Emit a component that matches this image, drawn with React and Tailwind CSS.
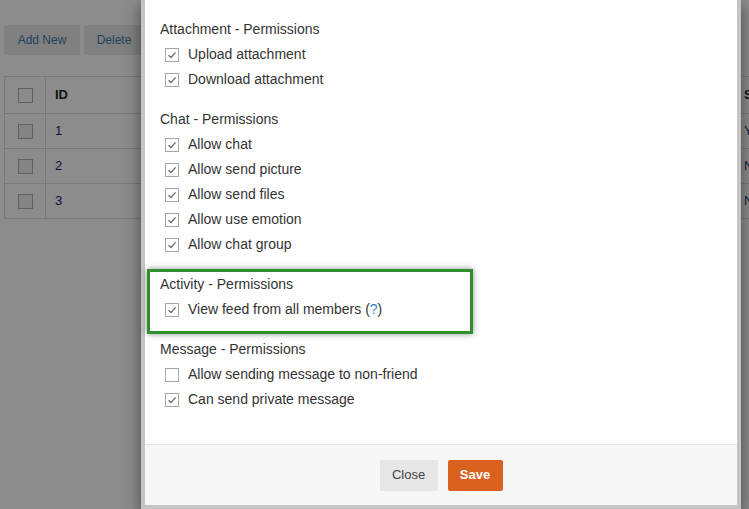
import React from "react";

const sections = [
  {
    title: "Attachment - Permissions",
    items: [
      { label: "Upload attachment", checked: true },
      { label: "Download attachment", checked: true },
    ],
  },
  {
    title: "Chat - Permissions",
    items: [
      { label: "Allow chat", checked: true },
      { label: "Allow send picture", checked: true },
      { label: "Allow send files", checked: true },
      { label: "Allow use emotion", checked: true },
      { label: "Allow chat group", checked: true },
    ],
  },
];

function Check({ checked }) {
  return (
    <span className="w-[14px] h-[14px] border border-[#a6a6a6] bg-white flex items-center justify-center shrink-0">
      {checked && (
        <svg width="10" height="10" viewBox="0 0 10 10">
          <path d="M1.5 5.2 L4 7.5 L8.6 2.4" fill="none" stroke="#6b6b6b" strokeWidth="1.3" />
        </svg>
      )}
    </span>
  );
}

function Item({ label, checked, children }) {
  return (
    <label className="flex items-center h-[25px] pl-[5px]">
      <Check checked={checked} />
      <span className="ml-[9px]">
        {label}
        {children}
      </span>
    </label>
  );
}

function Section({ title, items }) {
  return (
    <div>
      <div className="h-[25px] leading-[25px]">{title}</div>
      {items.map((it) => (
        <Item key={it.label} label={it.label} checked={it.checked} />
      ))}
    </div>
  );
}

export default function App() {
  return (
    <div
      className="relative w-[749px] h-[509px] overflow-hidden bg-white"
      style={{ fontFamily: '"Liberation Sans", Arial, sans-serif' }}
    >
      {/* page underneath */}
      <div className="pt-[25px] pl-[4px]">
        <div className="flex gap-[4px] text-[12px]">
          <button className="h-[30px] w-[76px] bg-[#eaeaea] text-[#3d7ab0] rounded-[2px]">Add New</button>
          <button className="h-[30px] w-[60px] bg-[#eaeaea] text-[#3d7ab0] rounded-[2px]">Delete</button>
        </div>
        <table className="mt-[21px] w-[900px] border-collapse text-[13px] text-[#222]">
          <tbody>
            <tr className="h-[37px]">
              <td className="w-[41px] border border-[#dcdcdc] text-center">
                <span className="inline-block w-[15px] h-[15px] border border-[#b0b0b0] bg-white align-middle" />
              </td>
              <td className="w-[691px] border border-[#dcdcdc] pl-[9px] font-bold">ID</td>
              <td className="border border-[#dcdcdc] pl-[7px] font-bold">S</td>
            </tr>
            {[
              ["1", "Y"],
              ["2", "N"],
              ["3", "N"],
            ].map(([id, s]) => (
              <tr key={id} className="h-[35px]">
                <td className="border border-[#dcdcdc] text-center">
                  <span className="inline-block w-[15px] h-[15px] border border-[#b0b0b0] bg-[#eeeeee] align-middle" />
                </td>
                <td className="border border-[#dcdcdc] pl-[9px] text-[#1a237e]">{id}</td>
                <td className="border border-[#dcdcdc] pl-[7px] text-[#1a3a7e]">{s}</td>
              </tr>
            ))}
          </tbody>
        </table>
      </div>

      {/* overlay */}
      <div className="absolute inset-0 bg-black/[0.45]" />

      {/* modal */}
      <div className="absolute left-[141px] top-0 w-[600px] h-[509px] border-x-4 border-b-4 border-[#c4c4c4] bg-white shadow-[0_5px_15px_rgba(0,0,0,0.5)] flex flex-col">
        <div className="flex-1 px-[15px] pt-[17px] text-[14px] text-[#333]">
          <Section {...sections[0]} />
          <div className="mt-[15px]">
            <Section {...sections[1]} />
          </div>
          <div className="mt-[12px] ml-[-13px] w-[326px] border-[3px] border-[#2f8f2a] pl-[10px] pb-[9px] shadow-[0_0_6px_rgba(0,0,0,0.45)]">
            <div className="h-[25px] leading-[25px]">Activity - Permissions</div>
            <Item label="View feed from all members" checked>
              {" "}(<span className="text-[#2a8ad4]">?</span>)
            </Item>
          </div>
          <div className="mt-[3px]">
            <Section
              title="Message - Permissions"
              items={[
                { label: "Allow sending message to non-friend", checked: false },
                { label: "Can send private message", checked: true },
              ]}
            />
          </div>
        </div>
        <div className="h-[61px] border-t border-[#e3e3e3] bg-[#f7f7f7] flex items-center justify-center gap-[10px]">
          <button className="h-[31px] w-[58px] bg-[#e6e6e6] text-[#444] text-[13px] rounded-[2px]">Close</button>
          <button className="h-[31px] w-[55px] bg-[#d9601f] text-white text-[13px] font-bold rounded-[2px]">Save</button>
        </div>
      </div>
    </div>
  );
}
